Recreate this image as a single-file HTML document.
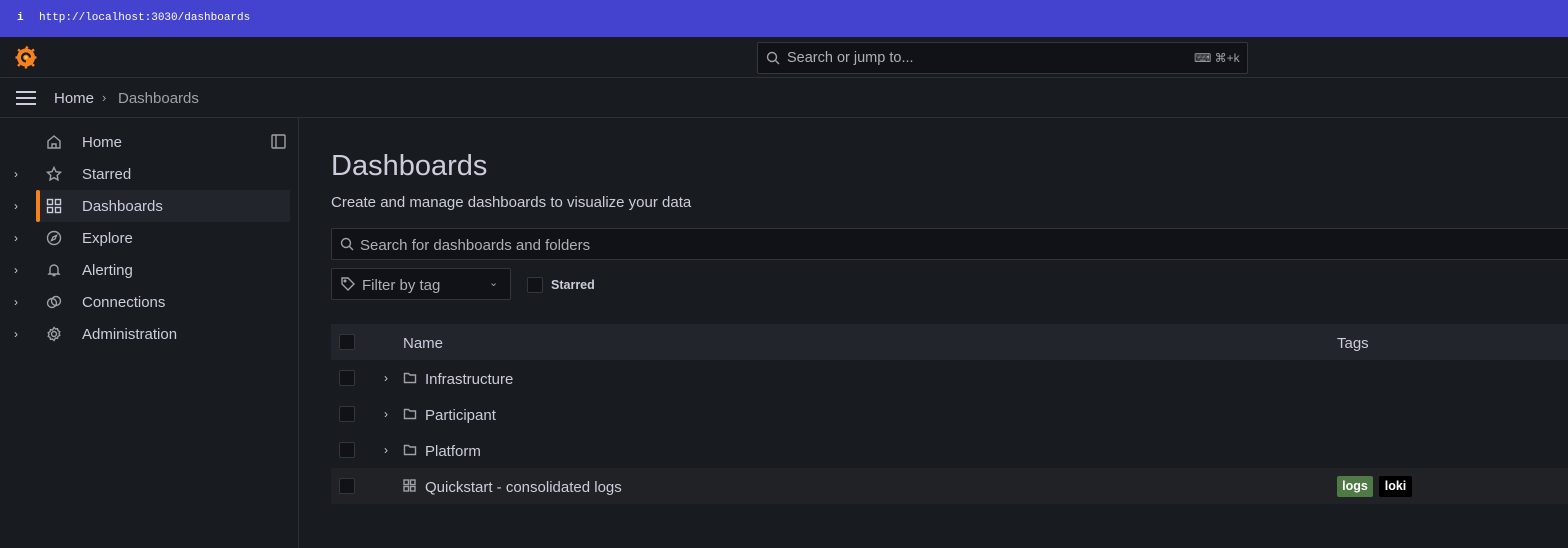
<!DOCTYPE html>
<html><head><meta charset="utf-8"><style>
*{box-sizing:border-box;margin:0;padding:0}
body{width:1568px;height:548px;overflow:hidden;background:#181b1f;font-family:"Liberation Sans",sans-serif;color:#ccccdc;position:relative}
.abs{position:absolute}
.top{left:0;top:0;width:1568px;height:37px;background:#4343cf}
.url{left:39px;top:12px;font-family:"Liberation Mono",monospace;font-size:11px;color:#fff}
.hdr{top:37px;left:0;width:1568px;height:41px;background:#181b1f;border-bottom:1px solid #2d3036}
.bc{top:78px;left:0;width:1568px;height:40px;border-bottom:1px solid #2d3036}
.side{left:0;top:118px;width:299px;height:430px;border-right:1px solid #2d3036}
.nav{position:absolute;left:82px;font-size:15px;color:#ccccdc}
.chev{position:absolute;left:14px;font-size:12px;color:#ccccdc}
.ic{position:absolute;left:46px}
.cb{position:absolute;left:339px;width:16px;height:16px;border:1px solid #34363c;border-radius:2px;background:#111217}
.row{position:absolute;left:331px;width:1237px;height:36px}
.rt{position:absolute;left:425px;font-size:15px;color:#ccccdc}
svg{stroke:#9fa1a8;fill:none;stroke-width:1.4}
</style></head><body>
<div class="abs top"></div>
<div class="abs url" style="left:17px;font-weight:bold">i</div>
<div class="abs url">http://localhost:3030/dashboards</div>
<div class="abs hdr"></div>
<svg class="abs" style="left:14px;top:45px" width="24" height="24" viewBox="0 0 24 24"><circle cx="12" cy="12.5" r="9" fill="#f5821f" stroke="none"/><path d="M12 4l1.5-2.5M18 6l2-1.5M20 12.5h2.5M4 12.5H1.5M6 6L4 4.5M6 19l-2 2M18 19l2 2M12 21v2.5" stroke="#f5821f" stroke-width="2.5"/><path d="M12 16.5a4 4 0 114-4" fill="none" stroke="#181b1f" stroke-width="2.2"/><circle cx="12" cy="12.5" r="1.6" fill="#fcca3d" stroke="none"/></svg>
<div class="abs" style="left:757px;top:42px;width:491px;height:32px;background:#111217;border:1px solid #34363c;border-radius:2px"></div>
<svg class="abs" style="left:766px;top:51px" width="14" height="14" viewBox="0 0 14 14"><circle cx="6" cy="6" r="4.5"/><path d="M9.5 9.5L13 13"/></svg>
<div class="abs" style="left:787px;top:50px;font-size:14.5px;color:#aeb0b6">Search or jump to...</div>
<div class="abs" style="left:1194px;top:51px;font-size:12px;color:#9fa1a8">⌨ ⌘+k</div>
<div class="abs bc"></div>
<div class="abs" style="left:16px;top:91px;width:20px;height:2px;background:#ccccdc;box-shadow:0 6px 0 #ccccdc,0 12px 0 #ccccdc"></div>
<div class="abs" style="left:54px;top:90px;font-size:15px;color:#ccccdc">Home</div>
<div class="abs" style="left:102px;top:90px;font-size:13px;color:#9fa1a8">›</div>
<div class="abs" style="left:118px;top:90px;font-size:15px;color:#9fa1a8">Dashboards</div>
<div class="abs side"></div>
<div class="abs" style="left:36px;top:190px;width:254px;height:32px;background:#22252b"></div>
<div class="abs" style="left:36px;top:190px;width:4px;height:32px;background:#f5821f;border-radius:2px"></div>
<svg class="abs" style="left:271px;top:134px" width="15" height="15" viewBox="0 0 15 15"><rect x="1" y="1" width="13" height="13" rx="1"/><path d="M5 1v13"/></svg>
<div class="nav" style="top:134px">Home</div>
<div class="nav" style="top:166px">Starred</div>
<div class="nav" style="top:198px">Dashboards</div>
<div class="nav" style="top:230px">Explore</div>
<div class="nav" style="top:262px">Alerting</div>
<div class="nav" style="top:294px">Connections</div>
<div class="nav" style="top:326px">Administration</div>
<div class="chev" style="top:167px">›</div><div class="chev" style="top:199px">›</div><div class="chev" style="top:231px">›</div><div class="chev" style="top:263px">›</div><div class="chev" style="top:295px">›</div><div class="chev" style="top:327px">›</div>
<svg class="ic" style="top:134px" width="16" height="16" viewBox="0 0 16 16"><path d="M2 7L8 2l6 5v7H2z M6 14v-4h4v4"/></svg>
<svg class="ic" style="top:166px" width="16" height="16" viewBox="0 0 16 16"><path d="M8 1.5l2 4.2 4.5.6-3.3 3.1.8 4.5L8 11.7 4 13.9l.8-4.5L1.5 6.3 6 5.7z"/></svg>
<svg class="ic" style="top:198px" width="16" height="16" viewBox="0 0 16 16"><rect x="1.5" y="1.5" width="5" height="5" stroke="#ccccdc"/><rect x="9.5" y="1.5" width="5" height="5" stroke="#ccccdc"/><rect x="1.5" y="9.5" width="5" height="5" stroke="#ccccdc"/><rect x="9.5" y="9.5" width="5" height="5" stroke="#ccccdc"/></svg>
<svg class="ic" style="top:230px" width="16" height="16" viewBox="0 0 16 16"><circle cx="8" cy="8" r="6.5"/><path d="M10.5 5.5L9 9 5.5 10.5 7 7z"/></svg>
<svg class="ic" style="top:262px" width="16" height="16" viewBox="0 0 16 16"><path d="M4 11V7a4 4 0 018 0v4l1 1H3z M6.5 13.5h3"/></svg>
<svg class="ic" style="top:294px" width="16" height="16" viewBox="0 0 16 16"><circle cx="6" cy="9" r="4.5"/><circle cx="10" cy="7" r="4.5"/></svg>
<svg class="ic" style="top:326px" width="16" height="16" viewBox="0 0 16 16"><circle cx="8" cy="8" r="2.5"/><path d="M8 1.5l1.5 1.5 2-.3.5 2 1.8 1-.8 1.8.8 1.8-1.8 1-.5 2-2-.3L8 14.5 6.5 13l-2 .3-.5-2-1.8-1 .8-1.8-.8-1.8 1.8-1 .5-2 2 .3z"/></svg>
<div class="abs" style="left:331px;top:150px;font-size:29px;color:#ccccdc">Dashboards</div>
<div class="abs" style="left:331px;top:194px;font-size:15px;color:#ccccdc">Create and manage dashboards to visualize your data</div>
<div class="abs" style="left:331px;top:228px;width:1240px;height:32px;background:#111217;border:1px solid #34363c;border-radius:2px"></div>
<svg class="abs" style="left:340px;top:237px" width="14" height="14" viewBox="0 0 14 14"><circle cx="6" cy="6" r="4.5"/><path d="M9.5 9.5L13 13"/></svg>
<div class="abs" style="left:360px;top:237px;font-size:15px;color:#aeb0b6">Search for dashboards and folders</div>
<div class="abs" style="left:331px;top:268px;width:180px;height:32px;background:#111217;border:1px solid #34363c;border-radius:2px"></div>
<svg class="abs" style="left:341px;top:277px" width="14" height="14" viewBox="0 0 14 14"><path d="M1 1h6l6 6-6 6-6-6z"/><circle cx="4" cy="4" r="0.8"/></svg>
<div class="abs" style="left:362px;top:277px;font-size:15px;color:#aeb0b6">Filter by tag</div>
<div class="abs" style="left:489px;top:276px;font-size:11px;color:#9fa1a8">⌄</div>
<div class="abs" style="left:527px;top:277px;width:16px;height:16px;border:1px solid #34363c;border-radius:2px;background:#111217"></div>
<div class="abs" style="left:551px;top:278px;font-size:12.5px;font-weight:bold;color:#ccccdc">Starred</div>
<div class="row" style="top:324px;background:#22252b"></div>
<div class="row" style="top:468px;background:#202226"></div>
<div class="cb" style="top:334px"></div><div class="cb" style="top:370px"></div><div class="cb" style="top:406px"></div><div class="cb" style="top:442px"></div><div class="cb" style="top:478px"></div>
<div class="abs" style="left:403px;top:335px;font-size:15px;color:#ccccdc">Name</div>
<div class="abs" style="left:1337px;top:335px;font-size:15px;color:#ccccdc">Tags</div>
<div class="abs" style="left:384px;top:371px;font-size:12px">›</div><div class="abs" style="left:384px;top:407px;font-size:12px">›</div><div class="abs" style="left:384px;top:443px;font-size:12px">›</div>
<svg class="abs" style="left:403px;top:371px" width="14" height="14" viewBox="0 0 14 14"><path d="M1.5 2.5h4l1.5 1.5h5.5v7.5h-11z"/></svg>
<svg class="abs" style="left:403px;top:407px" width="14" height="14" viewBox="0 0 14 14"><path d="M1.5 2.5h4l1.5 1.5h5.5v7.5h-11z"/></svg>
<svg class="abs" style="left:403px;top:443px" width="14" height="14" viewBox="0 0 14 14"><path d="M1.5 2.5h4l1.5 1.5h5.5v7.5h-11z"/></svg>
<svg class="abs" style="left:403px;top:479px" width="13" height="13" viewBox="0 0 13 13"><rect x="1" y="1" width="4.5" height="4.5"/><rect x="7.5" y="1" width="4.5" height="4.5"/><rect x="1" y="7.5" width="4.5" height="4.5"/><rect x="7.5" y="7.5" width="4.5" height="4.5"/></svg>
<div class="rt" style="top:371px">Infrastructure</div>
<div class="rt" style="top:407px">Participant</div>
<div class="rt" style="top:443px">Platform</div>
<div class="rt" style="top:479px">Quickstart - consolidated logs</div>
<div class="abs" style="left:1337px;top:476px;width:36px;height:21px;background:#4f7a45;border-radius:2px;color:#fff;font-size:12.5px;font-weight:bold;text-align:center;line-height:21px">logs</div>
<div class="abs" style="left:1379px;top:476px;width:33px;height:21px;background:#000;border-radius:2px;color:#fff;font-size:12.5px;font-weight:bold;text-align:center;line-height:21px">loki</div>
</body></html>
